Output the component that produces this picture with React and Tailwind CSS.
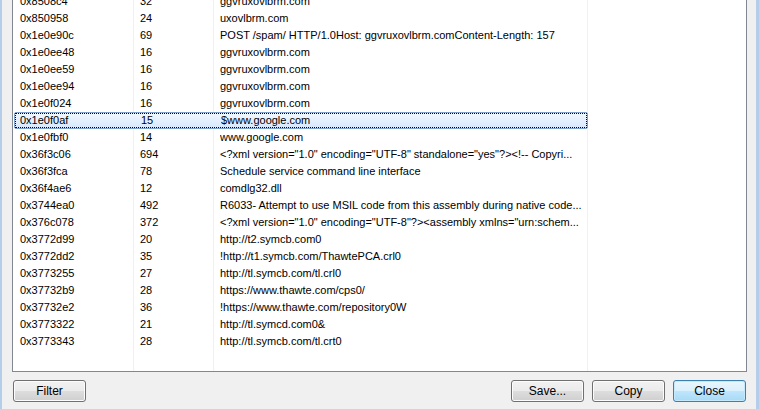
const rows = [
  ['0x8508c4', '32', 'ggvruxovlbrm.com'],
  ['0x850958', '24', 'uxovlbrm.com'],
  ['0x1e0e90c', '69', 'POST /spam/ HTTP/1.0Host: ggvruxovlbrm.comContent-Length: 157'],
  ['0x1e0ee48', '16', 'ggvruxovlbrm.com'],
  ['0x1e0ee59', '16', 'ggvruxovlbrm.com'],
  ['0x1e0ee94', '16', 'ggvruxovlbrm.com'],
  ['0x1e0f024', '16', 'ggvruxovlbrm.com'],
  ['0x1e0f0af', '15', '$www.google.com'],
  ['0x1e0fbf0', '14', 'www.google.com'],
  ['0x36f3c06', '694', '<?xml version="1.0" encoding="UTF-8" standalone="yes"?><!-- Copyri...'],
  ['0x36f3fca', '78', 'Schedule service command line interface'],
  ['0x36f4ae6', '12', 'comdlg32.dll'],
  ['0x3744ea0', '492', 'R6033- Attempt to use MSIL code from this assembly during native code...'],
  ['0x376c078', '372', '<?xml version="1.0" encoding="UTF-8"?><assembly xmlns="urn:schem...'],
  ['0x3772d99', '20', 'http://t2.symcb.com0'],
  ['0x3772dd2', '35', '!http://t1.symcb.com/ThawtePCA.crl0'],
  ['0x3773255', '27', 'http://tl.symcb.com/tl.crl0'],
  ['0x37732b9', '28', 'https://www.thawte.com/cps0/'],
  ['0x37732e2', '36', '!https://www.thawte.com/repository0W'],
  ['0x3773322', '21', 'http://tl.symcd.com0&'],
  ['0x3773343', '28', 'http://tl.symcb.com/tl.crt0'],
]

const SELECTED = 7

function Button({ children, primary }) {
  return (
    <button
      className={
        primary
          ? 'h-[22px] w-[73px] rounded-[3px] border border-[#3c7fb1] bg-[linear-gradient(#eaf6fd_0%,#d9f0fc_50%,#bee6fd_51%,#a7d9f5_100%)] text-[12px] text-black shadow-[inset_0_0_0_1px_#c4e9fb]'
          : 'h-[22px] w-[73px] rounded-[3px] border border-[#707070] bg-[linear-gradient(#f2f2f2_0%,#ebebeb_50%,#dddddd_51%,#cfcfcf_100%)] text-[12px] text-black shadow-[inset_0_0_0_1px_#fcfcfc]'
      }
    >
      {children}
    </button>
  )
}

export default function App() {
  return (
    <div
      className="flex h-[409px] w-[759px] flex-col overflow-hidden border-l-2 border-r-[3px] border-[#b4cde8] bg-[#f0f0f0] pl-[10px] pr-[9px] text-[11px] text-black"
      style={{ fontFamily: '"Liberation Sans", Arial, sans-serif' }}
    >
      <div className="relative h-[372px] w-[735px] overflow-hidden border-x border-b border-[#828790] bg-white">
        <div className="absolute inset-y-0 left-[120px] w-px bg-[#edf2f9]" />
        <div className="absolute inset-y-0 left-[200px] w-px bg-[#edf2f9]" />
        <div className="absolute inset-y-0 left-[574px] w-px bg-[#edf2f9]" />
        <div className="mt-[-7px] flex flex-col">
          {rows.map(([addr, len, str], i) => (
            <div
              key={addr}
              className={
                i === SELECTED
                  ? 'relative z-10 ml-px flex h-[17px] w-[574px] items-center rounded-[2px] border border-[#7da2ce] bg-[linear-gradient(#f2f8ff,#d6e8fd)] outline-1 outline-dotted outline-offset-[-2px] outline-black'
                  : 'flex h-[17px] items-center'
              }
            >
              <span className={i === SELECTED ? 'w-[126px] shrink-0 pl-[5px]' : 'w-[127px] shrink-0 pl-[7px]'}>{addr}</span>
              <span className="w-[80px] shrink-0">{len}</span>
              <span className="w-[366px] shrink-0 overflow-hidden whitespace-nowrap">{str}</span>
            </div>
          ))}
        </div>
      </div>
      <div className="mt-[8px] flex items-center pl-px pr-px">
        <Button>Filter</Button>
        <div className="flex-1" />
        <div className="flex gap-[8px]">
          <Button>Save...</Button>
          <Button>Copy</Button>
          <Button primary>Close</Button>
        </div>
      </div>
    </div>
  )
}
